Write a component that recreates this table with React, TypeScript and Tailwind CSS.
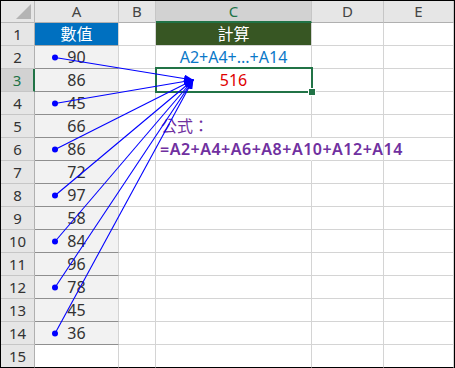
const cols = ["A", "B", "C", "D", "E"];
const nums = [90, 86, 45, 66, 86, 72, 97, 58, 84, 96, 78, 45, 36];

const font = { fontFamily: '"Noto Sans", "Noto Sans CJK TC", sans-serif' };

const Cell = ({ row, col }: { row: number; col: number }) => {
  let bg = "bg-white";
  let line = row === 15 ? "border-b-black" : "border-b-[#d4d4d4]";
  let extra = "";
  let content: React.ReactNode = null;

  if (col === 0) {
    if (row === 1) {
      bg = "bg-[#0070c0]";
      line = "border-b-[#a8a8a8]";
      extra = "justify-center text-white";
      content = "數值";
    } else if (row <= 14) {
      bg = "bg-[#f2f2f2]";
      line = "border-b-[#8f8f8f]";
      extra = "justify-center text-[#333]";
      content = nums[row - 2];
    }
  }
  if (col === 2) {
    if (row === 1) {
      bg = "bg-[#375623]";
      extra = "justify-center text-white";
      content = "計算";
    } else if (row === 2) {
      extra = "justify-center text-[#0a78c8]";
      content = "A2+A4+...+A14";
    } else if (row === 3) {
      extra = "justify-center text-[#e00000]";
      content = "516";
    } else if (row === 5) {
      extra = "pl-[5px] text-[#7030a0]";
      content = "公式：";
    } else if (row === 6) {
      extra = "pl-[4px] text-[#7030a0] font-semibold tracking-[0.5px] relative z-10";
      content = "=A2+A4+A6+A8+A10+A12+A14";
    }
  }
  const right = col === 2 && row === 6 ? "border-r-transparent" : "border-r-[#d4d4d4]";

  return (
    <div className={`flex items-center border-r border-b text-[16px] leading-none whitespace-nowrap ${bg} ${line} ${right} ${extra}`}>
      {content}
    </div>
  );
};

export default function App() {
  const tip = { x: 192, y: 79 };
  const rowsWithDots = [2, 4, 6, 8, 10, 12, 14];

  return (
    <div className="relative w-[455px] h-[368px] overflow-hidden bg-white border-t border-l border-r border-black" style={font}>
      <div className="grid grid-cols-[34px_84px_37px_156px_72px_70px] grid-rows-[22px_repeat(15,23px)]">
        {/* corner */}
        <div className="relative bg-[#e6e6e6] border-r border-b border-[#b8b8b8]">
          <div
            className="absolute right-[3px] bottom-[3px] w-[15px] h-[15px] bg-[#b4b4b4]"
            style={{ clipPath: "polygon(100% 0, 100% 100%, 0 100%)" }}
          />
        </div>
        {cols.map((c, i) => (
          <div
            key={c}
            className={
              i === 2
                ? "flex items-center justify-center bg-[#d2d2d2] text-[#217346] text-[15px] border-r border-r-[#c6c6c6] border-b-2 border-b-[#217346]"
                : "flex items-center justify-center bg-[#e6e6e6] text-[#444] text-[15px] border-r border-b border-r-[#c6c6c6] border-b-[#b0b0b0]"
            }
          >
            {c}
          </div>
        ))}
        {Array.from({ length: 15 }, (_, r) => r + 1).map((row) => [
          <div
            key={"h" + row}
            className={
              row === 3
                ? "flex items-center justify-center bg-[#d2d2d2] text-[#217346] text-[15px] border-b border-b-[#c6c6c6] border-r-2 border-r-[#217346]"
                : `flex items-center justify-center bg-[#e6e6e6] text-[#333] text-[15px] border-r border-b border-r-[#b0b0b0] ${
                    row === 15 ? "border-b-black" : "border-b-[#c6c6c6]"
                  }`
            }
          >
            {row}
          </div>,
          ...cols.map((_, ci) => <Cell key={row + "-" + ci} row={row} col={ci} />),
        ])}
      </div>

      {/* selected cell C3 */}
      <div className="absolute left-[154px] top-[66px] w-[158px] h-[26px] border-2 border-[#217346] pointer-events-none" />
      <div className="absolute left-[308px] top-[88px] w-[6px] h-[6px] bg-[#217346] outline outline-1 outline-white" />

      {/* trace precedents arrows */}
      <svg className="absolute left-0 top-0 z-20" width="455" height="368" viewBox="0 0 455 368">
        <defs>
          <marker id="ah" markerWidth="10" markerHeight="8" refX="9" refY="4" orient="auto" markerUnits="userSpaceOnUse">
            <path d="M0,0 L10,4 L0,8 Z" fill="#0000ff" />
          </marker>
        </defs>
        {rowsWithDots.map((r) => {
          const y = 22 + (r - 1) * 23 + 11.5;
          return (
            <g key={r}>
              <line x1={54} y1={y} x2={tip.x} y2={tip.y} stroke="#0000ff" strokeWidth="1.1" markerEnd="url(#ah)" />
              <circle cx={54} cy={y} r={3} fill="#0000ff" />
            </g>
          );
        })}
      </svg>
    </div>
  );
}
